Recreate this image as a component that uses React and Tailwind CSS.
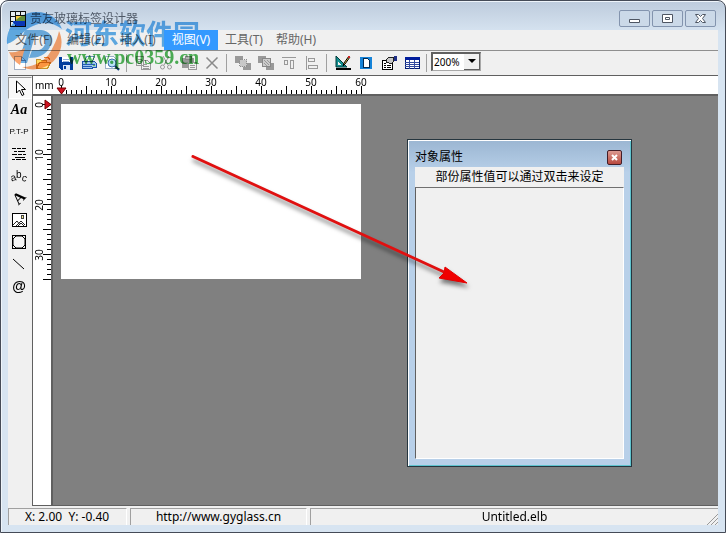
import React, { useState } from 'react';

// 16x16 toolbar icon wrapper
const Icon = ({ children, size = 16 }) => (
    <svg width={size} height={size} viewBox="0 0 16 16" fill="none" shapeRendering="crispEdges" aria-hidden="true">
        {children}
    </svg>
);

const icons = {
    newFile: (
        <Icon>
            <path d="M2.5 1.5h7l4 4v9h-11z" fill="#fff" stroke="#a3b0c4" />
            <path d="M9.5 1.5v4h4" stroke="#8494b0" />
        </Icon>
    ),
    open: (
        <Icon>
            <path d="M1.5 13.5v-9h4l1 1h5v3" fill="#ffd75e" stroke="#c8922b" />
            <path d="M1.5 13.5l3-6h11l-3 6z" fill="#ffe793" stroke="#c8922b" />
            <path d="M9 2h4v1h1v2" stroke="#e08a2a" />
        </Icon>
    ),
    save: (
        <Icon>
            <path d="M1 2h14v13H3l-2-2z" fill="#003c9c" />
            <path d="M4 2h8v5H4z" fill="#fff" />
            <path d="M5 4h6M5 6h6" stroke="#8fb0df" />
            <path d="M5 10h7v5H5z" fill="#d8e4f6" />
            <path d="M6 11h2v3H6z" fill="#003c9c" />
        </Icon>
    ),
    print: (
        <Icon>
            <path d="M5.5 1.5h8l-2 5h-8z" fill="#fff" stroke="#6e92c6" />
            <path d="M1.5 6.5h12l2 2v4h-3l-2 1h-9z" fill="#9ec4ee" stroke="#1b54a8" />
            <path d="M2 9h12M2 11h9" stroke="#245eb4" />
            <path d="M12 10h2" stroke="#5ab94a" />
        </Icon>
    ),
    preview: (
        <Icon>
            <path d="M1.5 1.5h8l3 3v9h-11z" fill="#fff" stroke="#9aaec8" />
            <circle cx="8" cy="8" r="4" fill="#b9e2f7" stroke="#396cad" shapeRendering="auto" />
            <path d="M11 11l4 4" stroke="#123d82" strokeWidth="2" shapeRendering="auto" />
        </Icon>
    ),
    copy: (
        <Icon>
            <path d="M1.5 1.5h7v9h-7zM6.5 5.5h6l3 3v6h-9z" fill="#f0f0f0" stroke="#999" />
            <path d="M3 4h4M3 6h3M3 8h3M8 9h4M8 11h6M8 13h6" stroke="#999" />
        </Icon>
    ),
    cut: (
        <Icon>
            <path d="M5 1l5 9M11 1l-5 9" stroke="#999" shapeRendering="auto" />
            <circle cx="4.5" cy="12" r="2" stroke="#999" shapeRendering="auto" />
            <circle cx="11.5" cy="12" r="2" stroke="#999" shapeRendering="auto" />
        </Icon>
    ),
    paste: (
        <Icon>
            <path d="M1 3h12v10H1z" fill="#999" />
            <path d="M4 1h6v3H4z" fill="#b5b5b5" stroke="#888" />
            <path d="M7.5 7.5h8v7h-8z" fill="#f0f0f0" stroke="#999" />
            <path d="M9 10h5M9 12h5" stroke="#999" />
        </Icon>
    ),
    remove: (
        <Icon>
            <path d="M2.5 2.5l11 11M13.5 2.5l-11 11" stroke="#8a8a8a" strokeWidth="1.5" shapeRendering="auto" />
        </Icon>
    ),
    toFront: (
        <Icon>
            <path d="M0 1h8v7H0zM8 8h8v7H8z" fill="#999" />
            <path d="M4.5 4.5h7v7h-7z" fill="#c8c8c8" stroke="#8e8e8e" strokeDasharray="1 1" />
        </Icon>
    ),
    toBack: (
        <Icon>
            <path d="M0 1h8v7H0zM8 8h8v7H8z" fill="#999" />
            <path d="M4.5 3.5h8v8h-8z" fill="#ccc" stroke="#888" />
            <path d="M6 5l5 5M9 5l3 3M6 8l3 3" stroke="#999" />
        </Icon>
    ),
    alignTop: (
        <Icon>
            <path d="M1 2.5h14M3.500 5.500v4h3v-4zM9.500 5.500v8h3v-8z" stroke="#999" />
        </Icon>
    ),
    alignLeft: (
        <Icon>
            <path d="M2.500 1v14M4.500 3.500h6v3h-6zM4.500 10.500h9v3h-9z" stroke="#999" />
        </Icon>
    ),
    design: (
        <Icon>
            <path d="M1 1v11h11z" fill="#138f8f" stroke="#003c3c" shapeRendering="auto" />
            <path d="M3 7v3h3z" fill="#f0f0f0" />
            <path d="M1 13.500h14v1H1z" fill="#000" stroke="#000" />
            <path d="M8 11l1-3 5-7 1 1-5 7z" fill="#f3d34b" stroke="#000" shapeRendering="auto" />
            <path d="M13 1h2v2h-2z" fill="#c22" />
        </Icon>
    ),
    page: (
        <Icon>
            <path d="M2 2h12v12H2z" fill="#1583d8" />
            <path d="M5.500 3.500h4l2 2v7h-6z" fill="#fff" stroke="#012a52" />
        </Icon>
    ),
    properties: (
        <Icon>
            <path d="M1.500 5.500h10v9h-10z" fill="#fff" stroke="#000" />
            <path d="M3 8h2M3 10h2M3 12h2M6 10h4M6 12h4" stroke="#000" />
            <path d="M5 5l3-3h4l1 4-3 3-2-1-3-1z" fill="#c8c8c8" stroke="#222" />
            <path d="M13 1h3v5h-3z" fill="#1f2f86" />
        </Icon>
    ),
    grid: (
        <Icon>
            <path d="M1.500 2.500h14v11h-14z" fill="#fff" stroke="#001c74" />
            <path d="M1 2h15v3H1z" fill="#001c9c" />
            <path d="M1 7.500h14M1 9.500h14M1 11.500h14M5.500 5v9M10.500 5v9" stroke="#334b9f" />
        </Icon>
    ),
};

const toolbarGroups = [
    [['新建', 'newFile'], ['打开', 'open'], ['保存', 'save'], ['打印', 'print'], ['预览', 'preview']],
    [['复制', 'copy'], ['剪切', 'cut'], ['粘贴', 'paste'], ['删除', 'remove']],
    [['置前', 'toFront'], ['置后', 'toBack'], ['顶对齐', 'alignTop'], ['左对齐', 'alignLeft']],
    [['设计', 'design'], ['页面', 'page'], ['属性', 'properties'], ['表格', 'grid']],
];

const menus = ['文件(F)', '编辑(E)', '插入(I)', '视图(V)', '工具(T)', '帮助(H)'];

const tools = [
    {
        name: '选择',
        icon: (
            <svg width="16" height="18" viewBox="0 0 16 18" aria-hidden="true">
                <path d="M4.500 2v12l3-3 2.500 5.500 2-1-2.500-5h4z" fill="#fff" stroke="#000" />
            </svg>
        ),
    },
    { name: '文字', icon: <span className="font-['Liberation_Serif',serif] text-sm font-bold italic">Aa</span> },
    { name: '段落', icon: <span className="font-['Liberation_Sans',sans-serif] text-[8px]">P.T-P</span> },
    {
        name: '多行',
        icon: (
            <Icon>
                <path d="M1 2.500h4M6 2.500h4M11 2.500h4M3 5.500h3M7 5.500h7M1 8.500h5M7 8.500h4M12 8.500h3M4 11.500h10M1 13.500h3M5 13.500h5M11 13.500h4" stroke="#000" />
            </Icon>
        ),
    },
    {
        name: '弧形文字',
        icon: (
            <svg width="18" height="16" viewBox="0 0 18 16" aria-hidden="true" className="overflow-visible font-['Liberation_Sans',sans-serif] text-[10px]">
                <text x="1" y="13" transform="rotate(-15 3 11)">a</text>
                <text x="6" y="10">b</text>
                <text x="12" y="13" transform="rotate(15 14 10)">c</text>
            </svg>
        ),
    },
    {
        name: '旋转文字',
        icon: (
            <svg width="18" height="18" viewBox="0 0 18 18" aria-hidden="true" className="overflow-visible font-['Liberation_Serif',serif] text-base font-bold">
                <text x="9" y="14" textAnchor="middle" transform="rotate(-45 9 9)">A</text>
            </svg>
        ),
    },
    {
        name: '图片',
        icon: (
            <Icon>
                <path d="M1.500 1.500h14v13h-14z" fill="#fff" stroke="#000" />
                <circle cx="11.500" cy="5" r="1.500" fill="#f4eb86" stroke="#444" />
                <path d="M2 13l4-4 3 4M5 14l5-5 4 4M7 14l3-3 3 3" stroke="#222" shapeRendering="auto" />
            </Icon>
        ),
    },
    {
        name: '形状',
        icon: (
            <Icon>
                <path d="M1.500 1.500h13v13h-13z" stroke="#000" />
                <path d="M5 2h6l3 3v6l-3 3H5l-3-3V5z" fill="#f6f6f6" stroke="#000" shapeRendering="auto" />
            </Icon>
        ),
    },
    {
        name: '直线',
        icon: (
            <Icon>
                <path d="M2 3l11 10" stroke="#000" shapeRendering="auto" />
            </Icon>
        ),
    },
    { name: '符号', icon: <span className="font-['Liberation_Sans',sans-serif] text-sm font-bold">@</span> },
];

const range = (n) => Array.from({ length: n }, (_, i) => i);

// Horizontal ruler, 5px per millimetre
const TopRuler = () => (
    <svg className="block h-5 w-full overflow-visible border-b-2 border-[#606060] bg-white font-['Noto_Sans',sans-serif] text-[10px]" aria-label="水平标尺">
        <g shapeRendering="crispEdges">
            {range(61).map((i) => (
                <line key={i} x1={28.5 + i * 5} x2={28.5 + i * 5} y1={i % 5 === 0 ? 10 : 14} y2="18" stroke="#000" />
            ))}
        </g>
        <text x="2" y="13">mm</text>
        {range(7).map((i) => (
            <text key={i} x={28 + i * 50} y="10" textAnchor="middle">{i * 10}</text>
        ))}
        <path d="M24 12h9l-4.500 6z" fill="#d01020" stroke="#700" strokeWidth="1" />
    </svg>
);

const SideRuler = () => (
    <svg className="block w-5 shrink-0 self-stretch overflow-visible border-r-2 border-[#606060] bg-white font-['Noto_Sans',sans-serif] text-[10px]" aria-label="垂直标尺">
        <g shapeRendering="crispEdges">
            {range(36).map((i) => (
                <line key={i} y1={8.5 + i * 5} y2={8.5 + i * 5} x1={i % 5 === 0 ? 10 : 14} x2="18" stroke="#000" />
            ))}
        </g>
        {range(4).map((i) => (
            <text key={i} textAnchor="middle" transform={`translate(10 ${9 + i * 50}) rotate(-90)`}>{i * 10}</text>
        ))}
        <path d="M12 4v9l6-4.500z" fill="#d01020" stroke="#700" />
    </svg>
);

const WindowButton = ({ label, children }) => (
    <button aria-label={label} className="flex h-[17px] w-[31px] items-center justify-center rounded-[2px] border border-[#8394ae] bg-[#cbd9e8]">
        <svg width="13" height="11" viewBox="0 0 13 11" fill="#fff" stroke="#4e5663" aria-hidden="true">{children}</svg>
    </button>
);

const Watermark = () => (
    <div className="pointer-events-none absolute top-0 left-0 z-20 flex items-start pt-2.5 pl-1 opacity-80 mix-blend-multiply">
        <svg width="60" height="60" viewBox="4 10 60 60" aria-hidden="true">
            <path d="M6 43C5 26 16 13 33 11c14-1 24 6 28 17-9-7-19-8-29-3C22 29 16 40 6 43z" fill="#3d9fe8" />
            <path d="M24 29h14c12 0 15 8 11 17-4 8-12 11-21 11l3-8h7c7-2 9-12 2-14h-6l-8 27h-9l9-28h-4z" fill="#4b9fe0" />
            <path d="M58 30c7 15-1 32-17 37-6 2-14 2-20-1 15 0 26-8 31-20 3-6 5-11 6-16z" fill="#fa8f4a" />
            <path d="M8 51c6 1 11-1 16-4l-5 17c-5-3-9-8-11-13z" fill="#fa8f4a" />
        </svg>
        <div className="pt-2 whitespace-nowrap">
            <div className="font-['Noto_Sans_CJK_SC',sans-serif] text-[27px] leading-7 font-bold text-[#3a9de8]">河东软件园</div>
            <div className="pl-0.5 font-['Liberation_Serif',serif] text-xl leading-5 font-bold text-[#22a32e]">www.pc0359.cn</div>
        </div>
    </div>
);

const TitleBar = () => (
    <header className="flex h-[29px] shrink-0 items-center justify-between pr-0.5 pl-0.5">
        <div className="flex items-center gap-1 pt-1.5">
            <Icon>
                <path d="M0 0h16v16H0z" fill="#111" />
                <path d="M1 1h4v4H1zM6 1h4v3H6zM11 1h4v3h-4zM1 6h4v4H1zM1 11h4v4H1z" fill="#e8eef2" />
                <path d="M6 5h9v5H6z" fill="#f7cb3f" />
                <path d="M3 10h12v5H6l-3-3z" fill="#174ec4" />
            </Icon>
            <h1 className="text-xs text-[#4f5967]">贵友玻璃标签设计器</h1>
        </div>
        <div className="flex gap-0.5 pt-1.5">
            <WindowButton label="最小化"><path d="M1.500 6.500h10v3h-10z" /></WindowButton>
            <WindowButton label="最大化"><path d="M1.500 1.500h10v8h-10zM4.500 4.500h4v2h-4z" /></WindowButton>
            <WindowButton label="关闭"><path d="M1.500 1.500h3l2 2 2-2h3l-3 4 3 4h-3l-2-2-2 2h-3l3-4z" /></WindowButton>
        </div>
    </header>
);

const PropertiesPanel = () => (
    <section className="absolute top-[43px] left-[354px] flex h-[328px] w-[225px] flex-col border border-[#26363f] bg-[#b8d0e9] bg-gradient-to-b from-[#9bb6d2] to-[#b8d0e9] to-10% p-px shadow-[inset_1px_1px_0_#fff,inset_-1px_-1px_0_#5fc4cf]">
        <div className="flex h-[26px] shrink-0 items-center justify-between pt-1.5 pr-2 pl-1.5">
            <h2 className="text-xs text-black">对象属性</h2>
            <button aria-label="关闭" className="flex h-[15px] w-[15px] items-center justify-center rounded-[2px] border border-[#431e28] bg-gradient-to-b from-[#dc9a92] to-[#b8483e]">
                <svg width="7" height="7" viewBox="0 0 7 7" stroke="#fff" strokeWidth="2" aria-hidden="true"><path d="M1 1l5 5M6 1l-5 5" /></svg>
            </button>
        </div>
        <div className="mx-1.5 mb-1.5 flex grow flex-col bg-[#f0f0f0]">
            <p className="h-5 text-center text-xs leading-5 text-black">部份属性值可以通过双击来设定</p>
            <div className="grow border border-t-[#707070] border-r-white border-b-white border-l-[#606060]" />
        </div>
    </section>
);

const Arrow = () => (
    <svg className="pointer-events-none absolute top-[52px] left-[131px]" width="292" height="146" viewBox="184 148 292 146" aria-hidden="true">
        <g className="drop-shadow-[1px_4px_2px_rgba(0,0,0,0.5)]">
            <path d="M193 156.500l250 115" stroke="#e01010" strokeWidth="3" strokeLinecap="round" />
            <path d="M467 283l-22 -16 -1 6 -5 5z" fill="#f00000" stroke="#e00000" strokeLinejoin="round" />
        </g>
    </svg>
);

const App = () => {
    const [zoom, setZoom] = useState('200%');
    const [tool, setTool] = useState('选择');

    return (
        <div className="relative flex min-h-screen flex-col rounded-t-lg border border-[#454b57] bg-[#d7e4f1] bg-gradient-to-b from-[#bdcbdc] to-[#d7e4f1] to-6% px-[7px] pb-[7px] font-['Noto_Sans','Noto_Sans_CJK_SC',sans-serif] text-black shadow-[inset_1px_1px_0_#eef4fa]">
            <TitleBar />
            <Watermark />

            {/* Menu */}
            <nav className="flex h-5 shrink-0 bg-[#f0f0f0] text-xs text-[#666]">
                {menus.map((name) => (
                    <button
                        key={name}
                        className={name === '视图(V)' ? 'relative z-30 w-[54px] bg-[#3399ff] text-white' : 'w-[52px] whitespace-nowrap'}
                    >
                        {name}
                    </button>
                ))}
            </nav>

            {/* Toolbar */}
            <div className="flex h-[26px] shrink-0 items-center border-t border-b border-t-[#8f8f8f] border-b-[#606060] bg-[#f0f0f0]">
                {toolbarGroups.map((group, index) => (
                    <div key={index} className="flex items-center">
                        {group.map(([label, icon]) => (
                            <button key={icon} aria-label={label} className="flex h-[22px] w-[23px] items-center justify-center">
                                {icons[icon]}
                            </button>
                        ))}
                        <span className="mr-1 ml-[3px] h-[18px] w-px bg-[#a0a0a0]" />
                    </div>
                ))}
                <div className="relative -mt-1 flex h-[19px] w-[50px] border border-t-2 border-l-2 border-[#a8a8a8] border-t-[#606060] border-l-[#606060] bg-white">
                    <select
                        aria-label="缩放"
                        value={zoom}
                        onChange={(e) => setZoom(e.target.value)}
                        className="w-full appearance-none pl-px text-[10px] leading-4 outline-none"
                    >
                        <option>100%</option>
                        <option>200%</option>
                    </select>
                    <span className="pointer-events-none absolute inset-y-0 right-0 flex w-4 items-center justify-center border-r border-b border-[#606060] bg-[#f0f0f0]">
                        <svg width="8" height="4" viewBox="0 0 8 4" aria-hidden="true"><path d="M0 0h8L4 4z" /></svg>
                    </span>
                </div>
            </div>

            <main className="flex grow">
                {/* Drawing tools */}
                <aside className="flex w-6 shrink-0 flex-col bg-[#f0f0f0] pt-px">
                    {tools.map((item) => (
                        <button
                            key={item.name}
                            aria-label={item.name}
                            onClick={() => setTool(item.name)}
                            className={
                                tool === item.name
                                    ? 'flex h-[22px] items-center justify-center border border-t-[#999] border-r-white border-b-white border-l-[#999] bg-[#f8f8f8]'
                                    : 'flex h-[22px] items-center justify-center pr-0.5'
                            }
                        >
                            {item.icon}
                        </button>
                    ))}
                </aside>

                <div className="flex min-w-0 grow flex-col border-b border-l border-[#606060]">
                    <TopRuler />
                    <div className="flex grow">
                        <SideRuler />
                        {/* Canvas */}
                        <div className="relative grow overflow-hidden bg-[#808080] pt-2 pl-2">
                            <div className="h-[175px] w-[300px] bg-white" />
                            <PropertiesPanel />
                            <Arrow />
                        </div>
                    </div>
                </div>
            </main>

            {/* Status bar */}
            <footer className="flex h-[19px] shrink-0 gap-[3px] bg-[#f0f0f0] pt-0.5 text-xs leading-4">
                <div className="w-[119px] border-t border-r border-l border-t-[#a0a0a0] border-r-white border-l-[#a0a0a0] pl-4 whitespace-pre">X: 2.00  Y: -0.40</div>
                <div className="w-[177px] border-t border-r border-l border-t-[#a0a0a0] border-r-white border-l-[#a0a0a0] text-center">
                    <a href="http://www.gyglass.cn">http://www.gyglass.cn</a>
                </div>
                <div className="relative grow border-t border-l border-[#a0a0a0] text-center">
                    Untitled.elb
                    <svg className="absolute right-0 bottom-0" width="12" height="12" viewBox="0 0 12 12" stroke="#999" aria-hidden="true">
                        <path d="M1 12L12 1M5 12l7-7M9 12l3-3" />
                    </svg>
                </div>
            </footer>
        </div>
    );
};

export default App;
